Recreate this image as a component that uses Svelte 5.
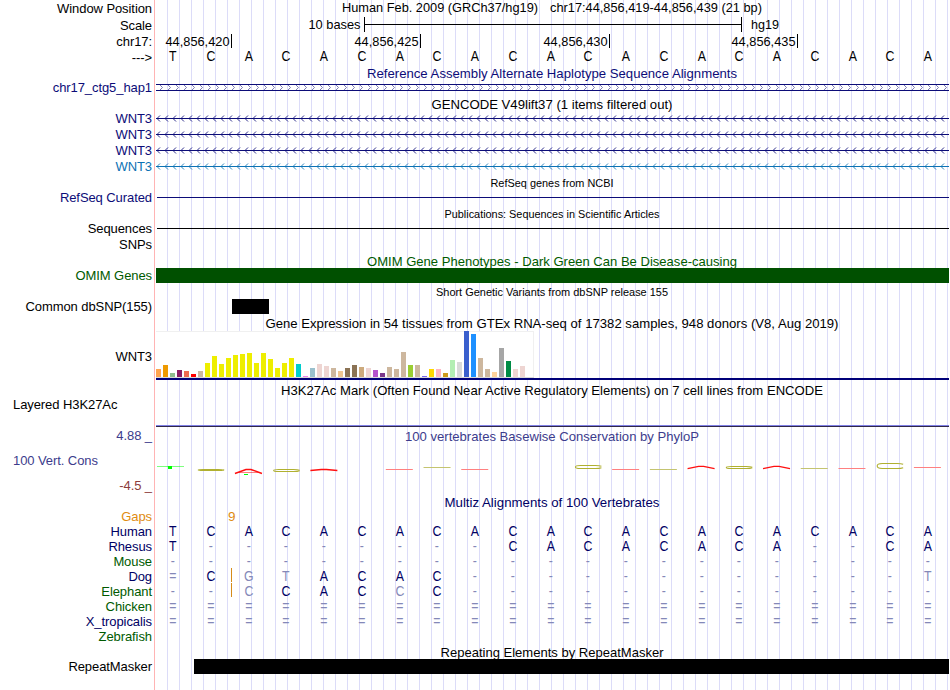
<script lang="ts">
  type Mark = { base: number; kind: string; top: number; bottom: number };

  const baseWidth = 37.78;

  const chevrons = Array.from({ length: 99 }, (_, i) => i * 8);

  const reference = 'TCACACACACACACACACACA';

  const ticks = [
    { x: 75.5, label: '44,856,420' },
    { x: 264.5, label: '44,856,425' },
    { x: 453.5, label: '44,856,430' },
    { x: 641.5, label: '44,856,435' }
  ];

  const transcripts = ['navy', 'navy', 'navy', 'blue'];

  // GTEx tissues in display order: [height, colour]
  const tissues: [number, string][] = [
    [8, '#ffa54f'], [12, '#ee9a00'], [4, '#8fbc8f'], [7, '#8b1c62'], [6, '#ee6a50'],
    [3, '#ff0000'], [6, '#cdb79e'], [14, '#eeee00'], [21, '#eeee00'], [13, '#eeee00'],
    [19, '#eeee00'], [22, '#eeee00'], [23, '#eeee00'], [24, '#eeee00'], [14, '#eeee00'],
    [24, '#eeee00'], [18, '#eeee00'], [9, '#eeee00'], [14, '#eeee00'], [19, '#eeee00'],
    [13, '#00cdcd'], [1, '#ee82ee'], [9, '#9ac0cd'], [13, '#eed5d2'], [11, '#eed5d2'],
    [9, '#cdb79e'], [6, '#eec591'], [9, '#8b7355'], [12, '#8b7355'], [10, '#cdaa7d'],
    [9, '#eed5d2'], [7, '#b452cd'], [4, '#7a378b'], [10, '#cdb79e'], [8, '#cdb79e'],
    [25, '#cdb79e'], [12, '#9acd32'], [12, '#cdb79e'], [1, '#7a67ee'], [8, '#ffd700'],
    [8, '#ffb6c1'], [4, '#cd9b1d'], [17, '#b4eeb4'], [15, '#d9d9d9'], [46, '#3a5fcd'],
    [43, '#1e90ff'], [19, '#cdb79e'], [8, '#cdb79e'], [5, '#ffd39b'], [29, '#a6a6a6'],
    [16, '#008b45'], [8, '#eed5d2'], [11, '#eed5d2'], [0, '#ff00ff']
  ];

  // Stretched conservation letters, y measured from the top of the wiggle
  const marks: Mark[] = [
    { base: 1, kind: 'c', top: 25.5, bottom: 26.5 },
    { base: 2, kind: 'a', top: 25.5, bottom: 29.5 },
    { base: 3, kind: 'c', top: 25.5, bottom: 27.5 },
    { base: 4, kind: 'a', top: 25.5, bottom: 26.5 },
    { base: 6, kind: 'a-flat', top: 25.5, bottom: 25.5 },
    { base: 7, kind: 'c-flat', top: 23.5, bottom: 23.5 },
    { base: 8, kind: 'a-flat', top: 25.5, bottom: 25.5 },
    { base: 11, kind: 'c', top: 21.5, bottom: 24.5 },
    { base: 12, kind: 'a-flat', top: 25.5, bottom: 25.5 },
    { base: 13, kind: 'c-flat', top: 25.5, bottom: 25.5 },
    { base: 14, kind: 'a', top: 22.4, bottom: 24.6 },
    { base: 15, kind: 'c', top: 22.5, bottom: 24.5 },
    { base: 16, kind: 'a', top: 22.4, bottom: 24.6 },
    { base: 17, kind: 'c-flat', top: 24.5, bottom: 24.5 },
    { base: 18, kind: 'a-flat', top: 24.5, bottom: 24.5 },
    { base: 19, kind: 'c', top: 19.5, bottom: 24.5 },
    { base: 20, kind: 'a-flat', top: 23.5, bottom: 23.5 }
  ];

  // Lower case letters are mismatches and are drawn faded
  const species = [
    { name: 'Human', color: 'ink', seq: 'TCACACACACACACACACACA', insert: false },
    { name: 'Rhesus', color: 'ink', seq: 'T--------CACACACA--CA', insert: false },
    { name: 'Mouse', color: 'green', seq: '---------------------', insert: false },
    { name: 'Dog', color: 'ink', seq: '=CgtACAC------------t', insert: true },
    { name: 'Elephant', color: 'green', seq: '--cCACcC-------------', insert: true },
    { name: 'Chicken', color: 'green', seq: '=====================', insert: false },
    { name: 'X_tropicalis', color: 'ink', seq: '=====================', insert: false },
    { name: 'Zebrafish', color: 'green', seq: '', insert: false }
  ];

  function isFaded(letter: string) {
    return !/[A-Z]/.test(letter);
  }

  function markPath({ base, kind, top, bottom }: Mark) {
    const left = 3.5 + base * baseWidth - base * 0.06;
    const right = left + 27;
    const mid = (top + bottom) / 2;
    if (kind === 'a') {
      return `M${left} ${bottom} L${left + 11} ${top} H${left + 16} L${right} ${bottom}`;
    }
    if (kind === 'c') {
      return `M${right} ${top + 0.8} Q${right - 2} ${top} ${right - 6} ${top} H${left + 6} Q${left + 1} ${top} ${left + 1} ${mid} Q${left + 1} ${bottom} ${left + 6} ${bottom} H${right - 6} Q${right - 2} ${bottom} ${right} ${bottom - 0.8}`;
    }
    return `M${left} ${top} H${right}`;
  }
</script>

{#snippet title(text: string, width: number, color = '', size = '')}
  <div class="title {size}">
    <svg width="793" height="15">
      <text class="{color} {size}" x="396" y="12" text-anchor="middle" textLength={width} lengthAdjust="spacingAndGlyphs">{text}</text>
    </svg>
  </div>
{/snippet}

<main class="browser">
  <div class="row position">
    <div class="label">Window Position</div>
    <svg width="793" height="17">
      <text x="186" y="12" textLength="196" lengthAdjust="spacingAndGlyphs">Human Feb. 2009 (GRCh37/hg19)</text>
      <text x="394" y="12" textLength="212" lengthAdjust="spacingAndGlyphs">chr17:44,856,419-44,856,439 (21 bp)</text>
    </svg>
  </div>
  <div class="row position">
    <div class="label">Scale</div>
    <svg width="793" height="17">
      <text x="204.5" y="12" text-anchor="end" textLength="52" lengthAdjust="spacingAndGlyphs">10 bases</text>
      <path class="black-line" d="M208.5 0 V15 M585.5 0 V15 M208 7.5 H586" />
      <text x="595" y="12" textLength="28" lengthAdjust="spacingAndGlyphs">hg19</text>
    </svg>
  </div>
  <div class="row">
    <div class="label">chr17:</div>
    <svg width="793" height="16">
      {#each ticks as tick}
        <text x={tick.x - 2} y="12" text-anchor="end" textLength="64" lengthAdjust="spacingAndGlyphs">{tick.label}</text>
        <path class="black-line" d="M{tick.x} 0 V14" />
      {/each}
    </svg>
  </div>
  <div class="row">
    <div class="label">---&gt;</div>
    <div class="bases top-bases">
      {#each reference as letter}
        <span>{letter}</span>
      {/each}
    </div>
  </div>

  {@render title('Reference Assembly Alternate Haplotype Sequence Alignments', 370, 'navy')}
  <div class="row">
    <div class="label navy haplotype">chr17_ctg5_hap1</div>
    <svg width="793" height="16">
      {#each chevrons as x}
        <path class="chevron" d="M{x + 4} 4 l2.5 2.5 l-2.5 2.5" />
      {/each}
      <path class="strand navy" d="M0 3.5 H793 M0 9.5 H793" />
    </svg>
  </div>

  {@render title('GENCODE V49lift37 (1 items filtered out)', 241, '', 'tight')}
  {#each transcripts as color}
    <div class="row">
      <div class="label {color}">WNT3</div>
      <svg width="793" height="16">
        <path class="strand {color}" d="M0 7.5 H793" />
        {#each chevrons as x}
          <path class="arrow {color}" d="M{x + 4} 4.5 l-3 3 l3 3" />
        {/each}
      </svg>
    </div>
  {/each}

  {@render title('RefSeq genes from NCBI', 123, '', 'small')}
  <div class="row">
    <div class="label navy">RefSeq Curated</div>
    <svg width="793" height="16"><path class="strand navy" d="M1 7.5 H793" /></svg>
  </div>

  {@render title('Publications: Sequences in Scientific Articles', 215, '', 'small')}
  <div class="row">
    <div class="label">Sequences</div>
    <svg width="793" height="16"><path class="black-line" d="M1 7.5 H793" /></svg>
  </div>
  <div class="row snps">
    <div class="label">SNPs</div>
  </div>

  {@render title('OMIM Gene Phenotypes - Dark Green Can Be Disease-causing', 370, 'green', 'tight')}
  <div class="row">
    <div class="label green">OMIM Genes</div>
    <div class="block omim"></div>
  </div>

  {@render title('Short Genetic Variants from dbSNP release 155', 232, '', 'small')}
  <div class="row dbsnp">
    <div class="label">Common dbSNP(155)</div>
    <div class="block variant"></div>
  </div>

  {@render title('Gene Expression in 54 tissues from GTEx RNA-seq of 17382 samples, 948 donors (V8, Aug 2019)', 573)}
  <div class="row gtex">
    <div class="label">WNT3</div>
    <svg width="793" height="52" shape-rendering="crispEdges">
      <rect width="378" height="47" fill="#fff" />
      <path d="M0 0.5 H378 M377.5 0 V46" stroke="#f0f0f0" />
      <path d="M0 46.5 H378" stroke="#d8d8d8" />
      {#each tissues as [height, color], i}
        <rect x={i * 7} y={46 - height} width="5" {height} fill={color} />
      {/each}
      <rect y="47" width="793" height="2" fill="#000078" />
    </svg>
  </div>

  {@render title('H3K27Ac Mark (Often Found Near Active Regulatory Elements) on 7 cell lines from ENCODE', 542, '', 'tight')}
  <div class="row layered">
    <div class="label left">Layered H3K27Ac</div>
    <svg width="793" height="32" shape-rendering="crispEdges">
      <rect y="28" width="793" height="1" fill="#8080e6" />
      <rect y="29" width="793" height="1" fill="#302848" />
    </svg>
  </div>

  <div class="row limit">
    <div class="label slate">4.88 _</div>
    <svg width="793" height="15">
      <text class="slate" x="396" y="12" text-anchor="middle" textLength="294" lengthAdjust="spacingAndGlyphs">100 vertebrates Basewise Conservation by PhyloP</text>
    </svg>
  </div>
  <div class="row wiggle">
    <div class="wiggle-labels">
      <div class="label left slate">100 Vert. Cons</div>
      <div class="label maroon">-4.5 _</div>
    </div>
    <svg width="793" height="51">
      <path d="M1 22.5 H28" stroke="#00ff00" opacity="0.5" />
      <rect x="12" y="22" width="4" height="3" fill="#00ff00" />
      <path d="M81 28.5 H103" stroke="#ff0000" opacity="0.5" />
      <path d="M88 30.5 H92" stroke="#00ff00" />
      {#each marks as mark}
        <path class="mark {mark.kind}" d={markPath(mark)} />
      {/each}
    </svg>
  </div>

  {@render title('Multiz Alignments of 100 Vertebrates', 215, 'ink', 'tight')}
  <div class="row species">
    <div class="label orange">Gaps</div>
    <svg width="793" height="15"><text class="orange" x="72" y="12">9</text></svg>
  </div>
  {#each species as row}
    <div class="row species">
      <div class="label {row.color}">{row.name}</div>
      <div class="bases ink">
        {#each row.seq as letter}
          <span class:faded={isFaded(letter)}>{letter.toUpperCase()}</span>
        {/each}
        {#if row.insert}
          <i class="insert"></i>
        {/if}
      </div>
    </div>
  {/each}

  {@render title('Repeating Elements by RepeatMasker', 223, '', 'repeat')}
  <div class="row">
    <div class="label">RepeatMasker</div>
    <div class="block repeats"></div>
  </div>
</main>

<style>
  :global(body) {
    margin: 0;
    background: #fff;
  }

  .browser {
    box-sizing: border-box;
    width: 950px;
    height: 690px;
    overflow: hidden;
    font: 13px/15px "Liberation Sans", Arial, sans-serif;
    color: #000;
    background:
      linear-gradient(#ffb4b4, #ffb4b4) 154px 0 / 1px 100% no-repeat,
      repeating-linear-gradient(to right, #dcdcf8 0 1px, transparent 1px 12px) 167px 0 / 783px 100% no-repeat,
      #fff;
  }

  .row {
    display: grid;
    grid-template-columns: 156px 793px;
    height: 16px;
  }

  .label {
    padding-right: 4px;
    text-align: right;
    white-space: nowrap;
    letter-spacing: -0.08px;
  }

  .label.left {
    padding-left: 13px;
    text-align: left;
  }

  .title {
    height: 15px;
    padding-left: 156px;
  }

  .title.tight,
  .title.repeat {
    height: 14px;
  }

  .title.repeat {
    padding-top: 1px;
    height: 14px;
  }

  svg {
    display: block;
    overflow: visible;
  }

  text {
    fill: currentColor;
    font-size: 13.5px;
  }

  text.small {
    font-size: 11px;
  }

  .navy {
    color: #0c0c78;
  }

  .ink {
    color: #000064;
  }

  .blue {
    color: #0c72b4;
  }

  .green {
    color: #005a00;
  }

  .slate {
    color: #3c3c8c;
  }

  .maroon {
    color: #8c3c3c;
  }

  .orange {
    color: #e08c10;
  }

  .position {
    height: 17px;
  }

  .position .label {
    padding-top: 1px;
  }

  .haplotype {
    margin-top: -1px;
  }

  .black-line {
    fill: none;
    stroke: #000;
  }

  .strand,
  .arrow {
    fill: none;
    stroke: currentColor;
  }

  .arrow {
    stroke-width: 0.85;
  }

  .chevron {
    fill: none;
    stroke: #6e6eae;
    stroke-width: 0.9;
  }

  .bases {
    position: relative;
    display: grid;
    grid-template-columns: repeat(21, 37.75px);
    margin-left: -2px;
    text-align: center;
    font-size: 14px;
  }

  .bases span {
    transform: scaleX(0.88);
  }

  .top-bases {
    margin-top: -1px;
  }

  .bases .faded {
    color: #8488b8;
  }

  .insert {
    position: absolute;
    left: 77px;
    top: -1px;
    width: 1px;
    height: 14px;
    background: #d68c1a;
  }

  .snps {
    height: 17px;
  }

  .block {
    height: 15px;
  }

  .omim {
    background: #005000;
  }

  .dbsnp {
    height: 17px;
  }

  .variant {
    width: 37px;
    margin-left: 76px;
    background: #000;
  }

  .gtex {
    height: 52px;
  }

  .gtex .label {
    padding-top: 18px;
  }

  .layered {
    height: 32px;
  }

  .limit {
    height: 15px;
  }

  .limit .label {
    margin-top: -1px;
  }

  .wiggle {
    height: 51px;
  }

  .wiggle-labels {
    display: flex;
    flex-direction: column;
    gap: 10px;
    padding-top: 9px;
  }

  .mark {
    fill: none;
    stroke-width: 1.1;
  }

  .a {
    stroke: #ff1010;
    stroke-width: 1.4;
  }

  .c {
    stroke: #b0b030;
  }

  .a-flat {
    stroke: #ff8080;
    stroke-width: 1;
  }

  .c-flat {
    stroke: #c4c470;
    stroke-width: 1;
  }

  .species {
    height: 15px;
  }

  .repeats {
    margin-left: 38px;
    background: #000;
  }
</style>
